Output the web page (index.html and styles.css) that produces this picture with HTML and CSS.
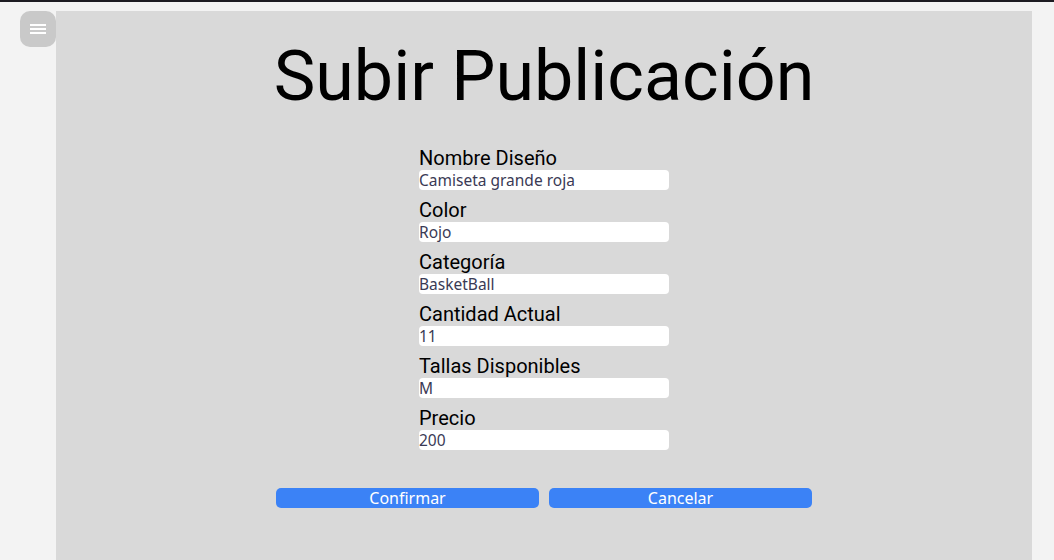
FILE: index.html
```html
<!DOCTYPE html>
<html lang="es">
<head>
<meta charset="utf-8">
<title>Subir Publicación</title>
<link rel="stylesheet" href="styles.css">
</head>
<body>
<div class="topbar"></div>
<div class="layout">
  <button class="menu-btn" aria-label="menu">
    <svg width="16" height="12" viewBox="0 0 16 12"><rect x="0" y="1" width="16" height="2" fill="#fff"/><rect x="0" y="5" width="16" height="2" fill="#fff"/><rect x="0" y="9" width="16" height="2" fill="#fff"/></svg>
  </button>
  <main class="panel">
    <h1 class="title">Subir Publicación</h1>
    <form class="form">
      <label class="field"><span class="label">Nombre Diseño</span><input class="input" value="Camiseta grande roja"></label>
      <label class="field"><span class="label">Color</span><input class="input" value="Rojo"></label>
      <label class="field"><span class="label">Categoría</span><input class="input" value="BasketBall"></label>
      <label class="field"><span class="label">Cantidad Actual</span><input class="input" value="11"></label>
      <label class="field"><span class="label">Tallas Disponibles</span><input class="input" value="M"></label>
      <label class="field"><span class="label">Precio</span><input class="input" value="200"></label>
    </form>
    <div class="actions">
      <button class="btn">Confirmar</button>
      <button class="btn">Cancelar</button>
    </div>
  </main>
</div>
</body>
</html>
```

FILE: styles.css
```css
* { box-sizing: border-box; }
html, body { margin: 0; height: 100%; }
body {
  background: #f3f3f3;
  font-family: Roboto, "Liberation Sans", sans-serif;
  overflow: hidden;
}
.topbar { height: 2px; background: #1c1b22; }
.layout {
  display: flex;
  align-items: flex-start;
  padding: 9px 0 0 20px;
}
.menu-btn {
  width: 36px;
  height: 36px;
  border: 0;
  border-radius: 10px;
  background: #c9c9c9;
  display: flex;
  align-items: center;
  justify-content: center;
  padding: 0;
}
.menu-btn svg { display: block; }
.panel {
  width: 976px;
  min-height: 560px;
  background: #d9d9d9;
  display: flex;
  flex-direction: column;
  align-items: center;
}
.title {
  margin: 24px 0 0;
  font-family: Roboto, sans-serif;
  font-weight: 400;
  font-size: 70px;
  line-height: 82px;
  color: #000;
}
.form {
  margin-top: 31px;
  width: 250px;
  display: flex;
  flex-direction: column;
  gap: 10px;
}
.field { display: flex; flex-direction: column; }
.label {
  font-size: 20px;
  line-height: 20px;
  padding-bottom: 2px;
  color: #000;
}
.input {
  height: 20px;
  border: 0;
  border-radius: 4px;
  background: #fff;
  padding: 0;
  font-family: "Noto Sans", sans-serif;
  font-size: 15.5px;
  color: #3a3a55;
}
.actions {
  margin-top: 38px;
  display: flex;
  gap: 10px;
}
.btn {
  width: 263px;
  height: 20px;
  border: 0;
  border-radius: 5px;
  background: #3b82f6;
  color: #fff;
  font-family: "Noto Sans", sans-serif;
  font-size: 16px;
  line-height: 20px;
  padding: 0;
}
```
